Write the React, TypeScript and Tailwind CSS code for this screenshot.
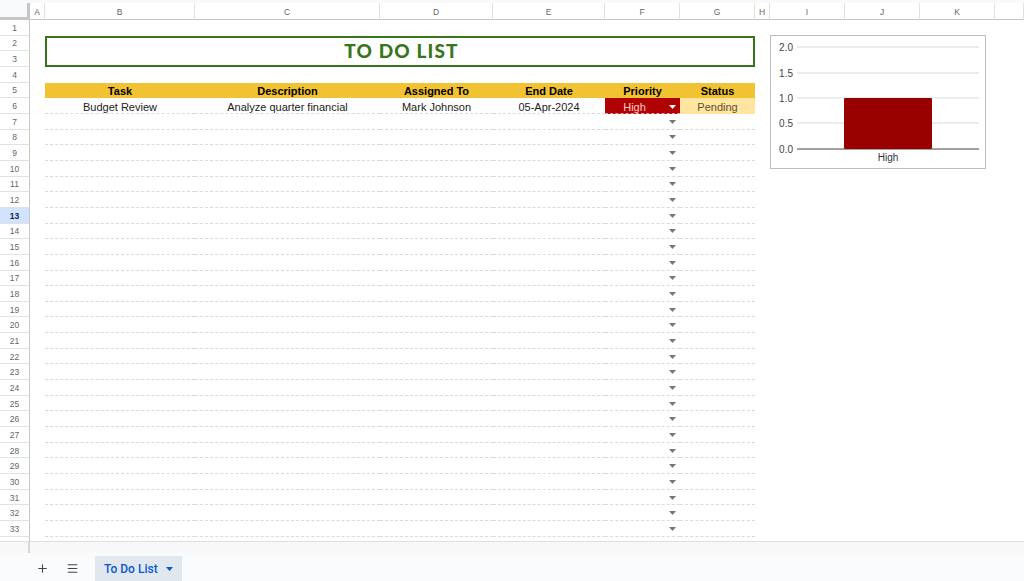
import { Plus, Menu } from "lucide-react";

const COLS = ["A", "B", "C", "D", "E", "F", "G", "H", "I", "J", "K", ""];
const GRID = "grid grid-cols-[30px_15px_150px_185px_113px_112px_75px_75px_15px_75px_75px_75px_1fr]";

function Caret({ className }: { className: string }) {
  return (
    <svg width="7" height="4" viewBox="0 0 7 4" className={className}>
      <path d="M0 0h7L3.5 4z" fill="currentColor" />
    </svg>
  );
}

function RowHead({ n }: { n: number }) {
  const active = n === 13;
  return (
    <div
      className={
        "flex items-center justify-center border-r border-b border-r-[#c4c7c5] border-b-[#e1e1e1] pt-[1px] text-[8.5px] leading-[10px] " +
        (active ? "bg-[#d3e3fd] font-bold text-[#0b2a5c]" : "bg-white text-[#666]")
      }
    >
      {n}
    </div>
  );
}

function EmptyRow({ n }: { n: number }) {
  const inTable = n >= 7 && n <= 33;
  return (
    <>
      <RowHead n={n} />
      <div />
      {[0, 1, 2, 3].map((i) => (
        <div key={i} className={inTable ? "border-b border-dashed border-[#dadada]" : ""} />
      ))}
      <div className={"flex items-center justify-end pt-[1px] pr-[4px] " + (inTable ? "border-b border-dashed border-[#dadada]" : "")}>
        {inTable && <Caret className="text-[#777]" />}
      </div>
      <div className={inTable ? "border-b border-dashed border-[#dadada]" : ""} />
      {[0, 1, 2, 3, 4].map((i) => (
        <div key={i} />
      ))}
    </>
  );
}

function Chart() {
  const grid = [
    { y: 11, label: "2.0" },
    { y: 37, label: "1.5" },
    { y: 62, label: "1.0" },
    { y: 87, label: "0.5" },
    { y: 113, label: "0.0" },
  ];
  return (
    <div className="absolute left-[770px] top-[35px] h-[134px] w-[216px] border border-[#bdbdbd] bg-white">
      <svg width="214" height="132" viewBox="0 0 214 132" className="font-['Liberation_Sans',Arial,sans-serif]">
        {grid.map((g) => (
          <g key={g.label}>
            <line x1="26" x2="208" y1={g.y} y2={g.y} stroke={g.y === 113 ? "#444" : "#d9d9d9"} strokeWidth="1" />
            <text x="22" y={g.y + 3.5} fontSize="10" textAnchor="end" fill="#444">
              {g.label}
            </text>
          </g>
        ))}
        <rect x="73" y="62" width="88" height="51" rx="1" fill="#990000" />
        <text x="117" y="125" fontSize="10" textAnchor="middle" fill="#333">
          High
        </text>
      </svg>
    </div>
  );
}

export default function App() {
  const rest = Array.from({ length: 27 }, (_, i) => i + 7);
  return (
    <div className="relative h-[581px] w-[1024px] overflow-hidden bg-white font-['Liberation_Sans',Arial,sans-serif]">
      <div className="h-[3px] bg-[#f8f9fa]" />
      <div className="h-[538px] overflow-hidden">
        <div className={GRID + " grid-rows-[17px] auto-rows-[15.66px]"}>
          {/* column header */}
          <div className="border-r-[3px] border-b-[3px] border-[#c4c7c5] bg-[#f8f9fa]" />
          {COLS.map((c, i) => (
            <div
              key={i}
              className="flex items-center justify-center border-r border-b border-r-[#e1e1e1] border-b-[#c4c7c5] bg-white pt-[1px] text-[8.5px] leading-[10px] text-[#666]"
            >
              {c}
            </div>
          ))}

          {/* row 1 */}
          <EmptyRow n={1} />

          {/* rows 2-3 with title merged over B:G */}
          <div className="col-start-3 col-span-6 row-start-3 row-span-2 flex items-center justify-center border-2 border-[#38761d]">
            <span className="pl-[3px] font-['Lato',sans-serif] text-[19px] leading-[22px] font-black tracking-[0.06em] text-[#38761d]">TO DO LIST</span>
          </div>
          {[2, 3].map((n) => (
            <div key={n} className="contents">
              <RowHead n={n} />
              <div />
              {[0, 1, 2, 3, 4].map((i) => (
                <div key={i} />
              ))}
            </div>
          ))}

          <EmptyRow n={4} />

          {/* row 5: header */}
          <RowHead n={5} />
          <div />
          {["Task", "Description", "Assigned To", "End Date", "Priority", "Status"].map((h) => (
            <div key={h} className="flex items-center justify-center bg-[#f1c232] pt-[2px] text-[11px] leading-[13px] font-bold text-black">
              {h}
            </div>
          ))}
          {[0, 1, 2, 3, 4].map((i) => (
            <div key={i} />
          ))}

          {/* row 6: data */}
          <RowHead n={6} />
          <div />
          {["Budget Review", "Analyze quarter financial", "Mark Johnson", "05-Apr-2024"].map((t) => (
            <div key={t} className="flex items-start justify-center border-b border-dashed border-[#dadada] pt-[3px] text-[11px] leading-[13px] text-[#222]">
              {t}
            </div>
          ))}
          <div className="relative flex items-start justify-center border-b border-dashed border-[#e8a0a0] bg-[#b10202] pt-[3px] text-[11px] leading-[13px] text-[#ffcfc9]">
            <span className="pr-[16px]">High</span>
            <Caret className="absolute right-[4px] top-[7px] text-white" />
          </div>
          <div className="flex items-start justify-center bg-[#ffe5a0] pt-[3px] text-[11px] leading-[13px] text-[#5f5030]">Pending</div>
          {[0, 1, 2, 3, 4].map((i) => (
            <div key={i} />
          ))}

          {rest.map((n) => (
            <EmptyRow key={n} n={n} />
          ))}
          <EmptyRow n={34} />
        </div>
      </div>

      <Chart />

      {/* bottom bar */}
      <div className="h-[40px] border-t border-[#e0e0e0] bg-[#f9fbfd]">
        <div className="flex h-[11px] bg-[#f8f8f8]">
          <div className="w-[30px] border-r-2 border-[#d6d6d6]" />
        </div>
        <div className="flex h-[28px] items-end">
          <div className="flex h-[25px] items-center gap-[17px] pl-[36px] pr-[16px] text-[#444]">
            <Plus size={13} strokeWidth={2} />
            <Menu size={13} strokeWidth={2} />
          </div>
          <div className="flex h-[25px] items-center gap-[8px] bg-[#e1e7ef] pl-[9px] pr-[9px] font-['Roboto',sans-serif] text-[12px] font-medium text-[#0b57d0]">
            To Do List
            <Caret className="text-[#0b57d0]" />
          </div>
        </div>
      </div>
    </div>
  );
}
